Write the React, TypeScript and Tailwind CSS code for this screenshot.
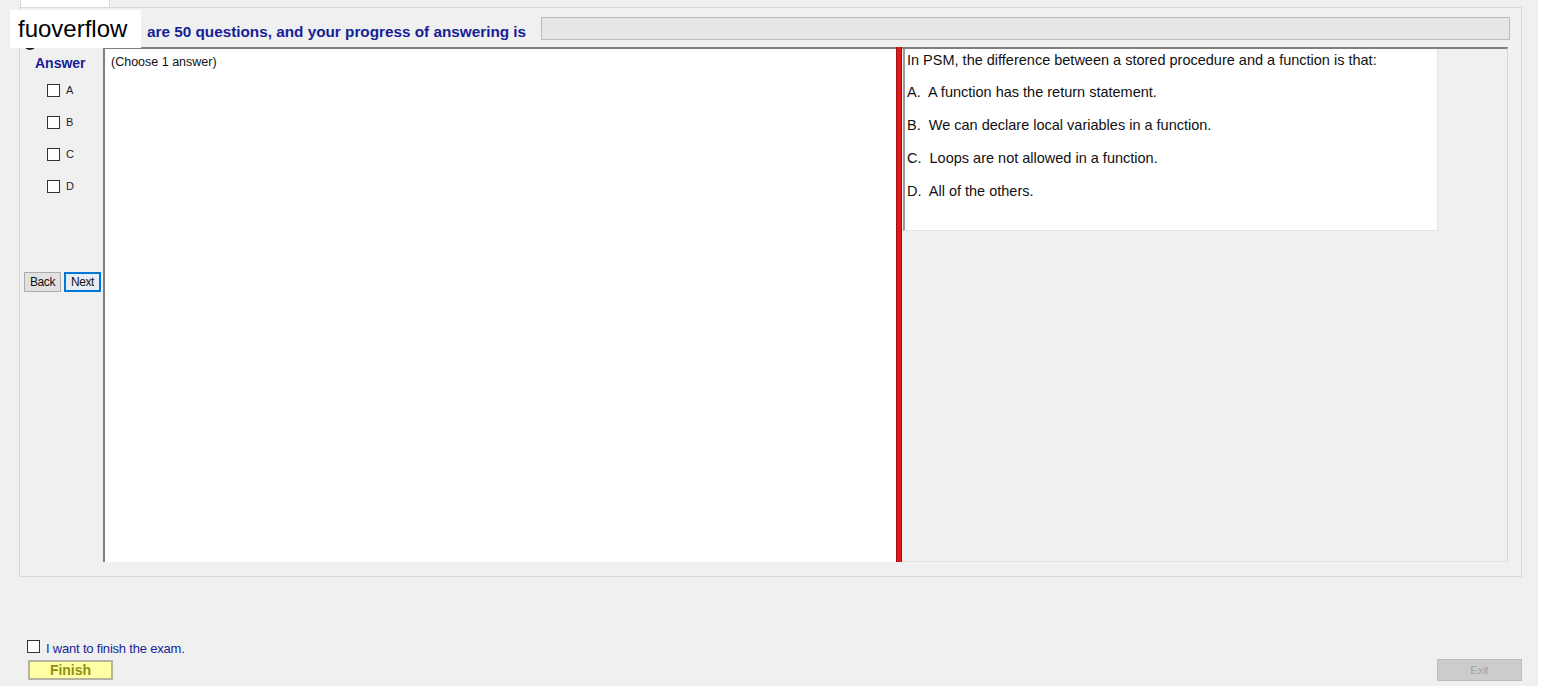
import React from 'react';

function Box() {
  return <span className="block h-[13px] w-[13px] shrink-0 border border-[#333333] bg-white" />;
}

const options = [
  'A.  A function has the return statement.',
  'B.  We can declare local variables in a function.',
  'C.  Loops are not allowed in a function.',
  'D.  All of the others.',
];

export default function App() {
  return (
    <div className="relative h-[690px] w-[1542px] overflow-hidden bg-white font-['Liberation_Sans',Arial,sans-serif] text-black">
      <div className="flex h-[686px] w-[1538px] flex-col bg-[#f0f0f0]">
        {/* Tab strip */}
        <div className="h-[7px] pl-[20px]">
          <div className="h-full w-[90px] border-x border-[#d9d9d9] bg-white" />
        </div>

        {/* Tab page */}
        <div className="ml-[19px] flex h-[570px] w-[1503px] flex-col border border-[#d9d9d9] bg-[#f0f0f0]">
          {/* Header */}
          <div className="flex h-[39px] items-start pt-[9px]">
            <p className="ml-[127px] whitespace-nowrap pt-[6px] text-[15.3px] font-bold leading-[18px] text-[#161e98]">
              are 50 questions, and your progress of answering is
            </p>
            <div className="ml-auto mr-[11px] h-[23px] w-[969px] border border-[#bcbcbc] bg-[#e6e6e6]" />
          </div>

          {/* Content */}
          <div className="flex h-[515px] pl-[3px]">
            {/* Answer column */}
            <div className="flex w-[80px] shrink-0 flex-col">
              <p className="pl-[12px] pt-[8px] text-[14px] font-bold leading-[16px] text-[#161e98]">Answer</p>
              <div className="mt-[13px] flex flex-col">
                {['A', 'B', 'C', 'D'].map((l) => (
                  <div key={l} className="flex h-[32px] items-start gap-[6px] pl-[24px]">
                    <Box />
                    <span className="text-[11px] leading-[12px] text-[#222]">{l}</span>
                  </div>
                ))}
              </div>
              <div className="ml-[1px] mt-[60px] flex gap-[3px]">
                <button className="h-[20px] w-[37px] border border-[#adadad] bg-[#e1e1e1] text-[12px] leading-[18px] tracking-[-0.4px] text-[#111]">
                  Back
                </button>
                <button className="h-[20px] w-[37px] border-2 border-[#0078d7] bg-[#e5eef6] text-[12px] leading-[16px] tracking-[-0.4px] text-[#111]">
                  Next
                </button>
              </div>
            </div>

            {/* Answer area */}
            <div className="w-[793px] shrink-0 border-l-2 border-t-2 border-[#808080] bg-white pl-[6px] pt-[6px]">
              <p className="text-[12.5px] leading-[14px] text-[#111]">(Choose 1 answer)</p>
            </div>

            {/* Splitter */}
            <div className="w-[6px] shrink-0 border-x border-[#a01010] bg-[#e01818]" />

            {/* Question panel */}
            <div className="w-[606px] shrink-0 border-b border-r border-t-2 border-b-[#e2e2e2] border-r-[#d6d6d6] border-t-[#808080] bg-[#f0f0f0]">
              <div className="ml-[1px] h-[182px] w-[535px] border-b border-l-2 border-r border-b-[#e4e4e4] border-l-[#9a9a9a] border-r-[#e4e4e4] bg-white pl-[2px] pt-[2px] text-[14.5px] text-[#111]">
                <p className="leading-[18px]">In PSM, the difference between a stored procedure and a function is that:</p>
                <div className="mt-[7px]">
                  {options.map((o) => (
                    <p key={o} className="h-[33px] whitespace-pre leading-[33px]">{o}</p>
                  ))}
                </div>
              </div>
            </div>
          </div>
        </div>

        {/* Bottom */}
        <div className="flex flex-1">
          <div className="flex flex-col pl-[27px] pt-[63px]">
            <div className="flex h-[14px] items-start gap-[6px]">
              <Box />
              <span className="pt-[1px] text-[13px] leading-[15px] tracking-[-0.2px] text-[#161e98]">I want to finish the exam.</span>
            </div>
            <button className="ml-[1px] mt-[6px] h-[20px] w-[85px] border-2 border-[#b4b4a0] bg-[#ffffa6] text-[14px] font-bold leading-[16px] text-[#8f8f12]">
              Finish
            </button>
          </div>
          <button className="ml-auto mr-[16px] mt-[82px] h-[22px] w-[85px] border border-[#bdbdbd] bg-[#cccccc] text-[11px] leading-[20px] text-[#a3a3a3]">
            Exit
          </button>
        </div>
      </div>

      {/* Overlays */}
      <div className="absolute left-[24px] top-[38px] h-[12px] w-[12px] rounded-full bg-[#1e1e1e]" />
      <div className="absolute left-[10px] top-[10px] flex h-[38px] w-[131px] items-center bg-white pl-[8px]">
        <span className="text-[24px] leading-[28px] text-black">fuoverflow</span>
      </div>
    </div>
  );
}
